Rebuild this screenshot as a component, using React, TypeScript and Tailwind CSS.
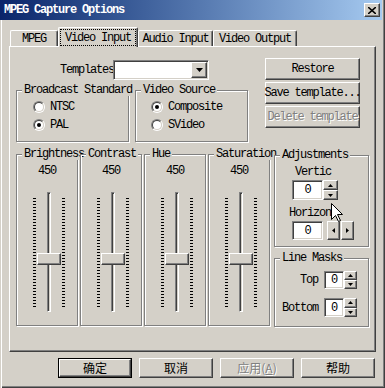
import React from 'react';

const raised =
  'bg-[#d4d0c8] border border-t-white border-l-white border-r-[#404040] border-b-[#404040] shadow-[inset_-1px_-1px_0_#808080]';
const sunken =
  'border border-t-[#808080] border-l-[#808080] border-r-white border-b-white shadow-[inset_1px_1px_0_#404040,inset_-1px_-1px_0_#d4d0c8]';
const etched = 'border border-[#808080] shadow-[inset_1px_1px_0_#fff,1px_1px_0_#fff]';
const grayed = 'text-[#808080] [text-shadow:1px_1px_0_#fff]';
const cjk = "font-['Noto_Sans_CJK_SC',sans-serif] tracking-normal text-[12px]";

type Dir = 'up' | 'down' | 'left' | 'right';
const arrowPts: Record<Dir, [number, number, string]> = {
  up: [5, 3, '2.5,0 5,3 0,3'],
  down: [5, 3, '0,0 5,0 2.5,3'],
  left: [3, 5, '3,0 3,5 0,2.5'],
  right: [3, 5, '0,0 3,2.5 0,5'],
};

function Arrow({ dir }: { dir: Dir }) {
  const [w, h, pts] = arrowPts[dir];
  return (
    <svg width={w} height={h} viewBox={`0 0 ${w} ${h}`}>
      <polygon points={pts} fill="#000" />
    </svg>
  );
}

function Group({
  label,
  className = '',
  children,
}: {
  label: string;
  className?: string;
  children?: React.ReactNode;
}) {
  return (
    <div className={`relative ${etched} ${className}`}>
      <span className="absolute left-[5px] top-[-7px] whitespace-nowrap bg-[#d4d0c8] px-[2px] leading-[12px]">
        {label}
      </span>
      {children}
    </div>
  );
}

function Radio({ label, checked }: { label: string; checked?: boolean }) {
  return (
    <div className="flex h-[12px] items-center">
      <span className="flex h-[12px] w-[12px] items-center justify-center rounded-full border border-t-[#808080] border-l-[#808080] border-r-white border-b-white">
        <span className="flex h-[10px] w-[10px] items-center justify-center rounded-full border border-t-[#404040] border-l-[#404040] border-r-[#d4d0c8] border-b-[#d4d0c8] bg-white">
          {checked && <span className="h-[4px] w-[4px] rounded-full bg-black" />}
        </span>
      </span>
      <span className="ml-[5px]">{label}</span>
    </div>
  );
}

function Button({
  children,
  className = '',
}: {
  children: React.ReactNode;
  className?: string;
}) {
  return (
    <div className={`${raised} flex items-center justify-center whitespace-nowrap ${className}`}>
      {children}
    </div>
  );
}

const ticks =
  'w-[3px] mt-[6px] h-[109px] bg-[repeating-linear-gradient(to_bottom,#000_0px,#000_1px,transparent_1px,transparent_3px)]';

function SliderGroup({ label }: { label: string }) {
  return (
    <Group label={label} className="h-[172px] w-[62px]">
      <div className="mt-[10px] text-center">450</div>
      <div className="relative ml-[16px] mt-[15px] flex h-[120px] w-[32px] justify-between">
        <div className={ticks} />
        <div className="h-full w-[4px] border border-t-[#808080] border-l-[#808080] border-r-white border-b-white shadow-[inset_1px_1px_0_#404040]" />
        <div className={ticks} />
        <div className={`absolute left-[4px] top-[61px] h-[12px] w-[24px] ${raised}`} />
      </div>
    </Group>
  );
}

function Edit({ className = '' }: { className?: string }) {
  return (
    <div className={`${sunken} flex items-center justify-center bg-white ${className}`}>0</div>
  );
}

function Spin({ className = '' }: { className?: string }) {
  return (
    <div className={`flex flex-col ${className}`}>
      <div className={`${raised} flex flex-1 items-center justify-center`}>
        <Arrow dir="up" />
      </div>
      <div className={`${raised} flex flex-1 items-center justify-center`}>
        <Arrow dir="down" />
      </div>
    </div>
  );
}

const tabs = [
  { name: 'MPEG', w: 'w-[48px]' },
  { name: 'Video Input', w: 'w-[80px]', active: true },
  { name: 'Audio Input', w: 'w-[75px]' },
  { name: 'Video Output', w: 'w-[84px]' },
];

export default function App() {
  return (
    <div className="relative h-[388px] w-[385px] overflow-hidden bg-[#d4d0c8] font-['Liberation_Mono','Courier_New',monospace] text-[12px] leading-[12px] tracking-[-1.2px] text-black shadow-[inset_1px_0_0_#d4d0c8,inset_2px_0_0_#fff,inset_-1px_-1px_0_#404040,inset_-2px_-2px_0_#808080]">
      {/* title bar */}
      <div className="flex h-[20px] w-[382px] items-center justify-between bg-gradient-to-r from-[#0a246a] to-[#a6caf0] pl-[4px] pr-[2px]">
        <span className="font-bold text-white">MPEG Capture Options</span>
        <div className={`${raised} flex h-[14px] w-[16px] items-center justify-center`}>
          <svg width="8" height="7" viewBox="0 0 8 7">
            <path d="M0 0 L8 7 M8 0 L0 7" stroke="#000" strokeWidth="1.6" />
          </svg>
        </div>
      </div>

      {/* tabs */}
      <div className="flex h-[26px] items-end pl-[10px]">
        {tabs.map((t) =>
          t.active ? (
            <div
              key={t.name}
              className={`relative z-10 mb-[-1px] flex h-[20px] ${t.w} rounded-t-[2px] border-l border-t border-r border-l-white border-t-white border-r-[#404040] bg-[#d4d0c8] shadow-[inset_-1px_0_0_#808080]`}
            >
              <div className="mx-[1px] mt-[1px] mb-[1px] flex flex-1 items-center justify-center border border-dotted border-black">
                {t.name}
              </div>
            </div>
          ) : (
            <div
              key={t.name}
              className={`flex h-[16px] ${t.w} items-center justify-center rounded-t-[2px] border-l border-t border-r border-l-white border-t-white border-r-[#404040] shadow-[inset_-1px_0_0_#808080]`}
            >
              {t.name}
            </div>
          ),
        )}
      </div>

      {/* panel */}
      <div className="ml-[9px] h-[306px] w-[367px] border border-t-white border-l-white border-r-[#404040] border-b-[#404040] pl-[6px] pt-[11px] shadow-[inset_-1px_-1px_0_#808080]">
        <div className="flex">
          <div className="flex w-[232px] flex-col">
            <div className="ml-[44px] mt-[2px] flex h-[20px] items-center">
              <span className="w-[53px] whitespace-nowrap">Templates</span>
              <div className={`${sunken} flex h-[20px] w-[96px] justify-end bg-white p-[1px]`}>
                <div className={`${raised} flex h-full w-[16px] items-center justify-center`}>
                  <svg width="7" height="4" viewBox="0 0 7 4">
                    <polygon points="0,0 7,0 3.5,4" fill="#000" />
                  </svg>
                </div>
              </div>
            </div>
            <div className="mt-[10px] flex gap-[6px]">
              <Group label="Broadcast Standard" className="h-[52px] w-[113px]">
                <div className="flex flex-col gap-[6px] pl-[16px] pt-[10px]">
                  <Radio label="NTSC" />
                  <Radio label="PAL" checked />
                </div>
              </Group>
              <Group label="Video Source" className="h-[52px] w-[113px]">
                <div className="flex flex-col gap-[6px] pl-[15px] pt-[10px]">
                  <Radio label="Composite" checked />
                  <Radio label="SVideo" />
                </div>
              </Group>
            </div>
          </div>
          <div className="ml-[17px] flex flex-col gap-[2px]">
            <Button className="h-[22px] w-[95px]">Restore</Button>
            <Button className="h-[22px] w-[95px]">Save template...</Button>
            <Button className={`h-[22px] w-[95px] ${grayed}`}>Delete template</Button>
          </div>
        </div>

        <div className="mt-[12px] flex">
          <div className="flex gap-[2px]">
            <SliderGroup label="Brightness" />
            <SliderGroup label="Contrast" />
            <SliderGroup label="Hue" />
            <SliderGroup label="Saturation" />
          </div>
          <div className="ml-[4px] mt-[1px] flex flex-col">
            <Group label="Adjustments" className="h-[92px] w-[95px]">
              <div className="ml-[20px] mt-[10px] whitespace-nowrap">Vertic</div>
              <div className="ml-[17px] mt-[2px] flex">
                <Edit className="h-[20px] w-[31px]" />
                <Spin className="h-[20px] w-[15px]" />
              </div>
              <div className="ml-[14px] mt-[7px] whitespace-nowrap">Horizon</div>
              <div className="ml-[17px] mt-[2px] flex">
                <Edit className="h-[19px] w-[31px]" />
                <div className={`${raised} ml-[4px] flex h-[19px] w-[13px] items-center justify-center`}>
                  <Arrow dir="left" />
                </div>
                <div className={`${raised} ml-[1px] flex h-[19px] w-[13px] items-center justify-center`}>
                  <Arrow dir="right" />
                </div>
              </div>
            </Group>
            <Group label="Line Masks" className="mt-[11px] h-[69px] w-[95px]">
              <div className="mt-[12px] flex items-center">
                <span className="w-[43px] text-right">Top</span>
                <Edit className="ml-[6px] h-[18px] w-[20px]" />
                <Spin className="h-[18px] w-[13px]" />
              </div>
              <div className="mt-[9px] flex items-center">
                <span className="w-[43px] text-right">Bottom</span>
                <Edit className="ml-[6px] h-[19px] w-[20px]" />
                <Spin className="h-[19px] w-[13px]" />
              </div>
            </Group>
          </div>
        </div>
      </div>

      {/* dialog buttons */}
      <div className={`mt-[6px] flex justify-end gap-[7px] pr-[10px] ${cjk}`}>
        <div className="h-[20px] w-[74px] border border-black">
          <Button className="h-full w-full">确定</Button>
        </div>
        <Button className="h-[20px] w-[74px]">取消</Button>
        <Button className={`h-[20px] w-[74px] ${grayed}`}>
          应用(<span className="underline">A</span>)
        </Button>
        <Button className="h-[20px] w-[74px]">帮助</Button>
      </div>

      {/* mouse pointer */}
      <svg className="absolute left-[331px] top-[203px]" width="12" height="19" viewBox="0 0 12 19">
        <path
          d="M0.5 0.5 L0.5 16.5 L4.5 12.5 L7.5 18.5 L9.5 17.5 L6.5 11.5 L11.5 11.5 Z"
          fill="#fff"
          stroke="#000"
          strokeWidth="1"
        />
      </svg>
    </div>
  );
}
